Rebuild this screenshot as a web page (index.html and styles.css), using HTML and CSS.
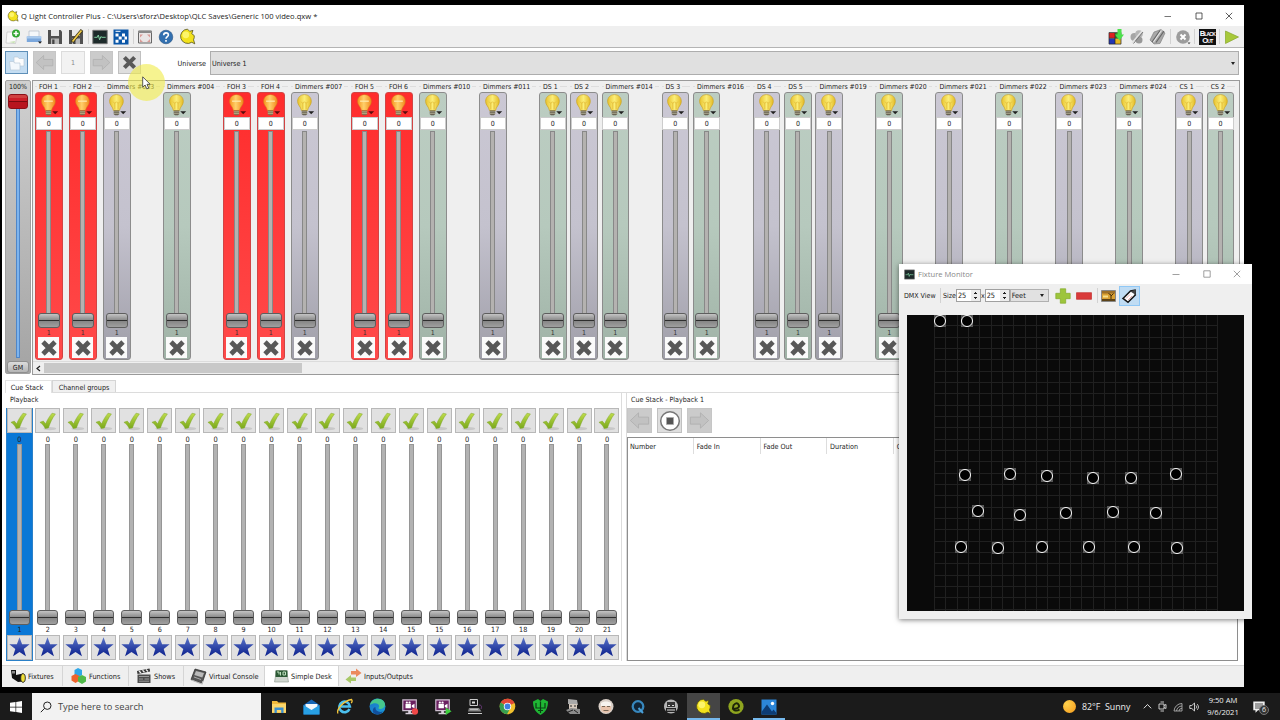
FILE: index.html
```
<!DOCTYPE html>
<html lang="en">
<head>
    <meta charset="UTF-8">
    <title>Q Light Controller Plus</title>
    <link rel="stylesheet" href="styles.css">
</head>
<body>

    <!-- Shared icons -->
    <svg class="defs" width="0" height="0">
        <defs>
            <linearGradient id="g-bulb" x1="0" x2="1"><stop offset="0" stop-color="#e8c22e"/><stop offset=".5" stop-color="#fbee78"/><stop offset="1" stop-color="#e3ba26"/></linearGradient>
            <linearGradient id="g-hot" x1="0" x2="1"><stop offset="0" stop-color="#f7931e"/><stop offset=".45" stop-color="#ffd06a"/><stop offset="1" stop-color="#f28a1c"/></linearGradient>
            <linearGradient id="g-star" x1="0" x2="0" y1="0" y2="1"><stop offset="0" stop-color="#5a74c8"/><stop offset="1" stop-color="#0a1f8c"/></linearGradient>
            <linearGradient id="g-check" x1="0" x2="0" y1="0" y2="1"><stop offset="0" stop-color="#bfdc4a"/><stop offset="1" stop-color="#79a81c"/></linearGradient>
            <linearGradient id="g-edge" x1="0" x2="1" y1="0" y2="1"><stop offset="0" stop-color="#1b74c8"/><stop offset="1" stop-color="#1a9bd8"/></linearGradient>
        </defs>
        <symbol id="bulb" viewBox="0 0 22 22">
            <path d="M10.500 1.500c-4 0-6.300 2.800-6.300 6.200 0 3.400 3 4.800 3.500 8.300h5.600c.6-3.500 3.500-4.900 3.500-8.300 0-3.400-2.300-6.200-6.300-6.200z" fill="url(#g-bulb)" stroke="#c9a224" stroke-width=".6"/>
            <path d="M7.500 8L9 9.500 10.500 8 12 9.500 13.500 8M9 9.500V15M12 9.500V15" fill="none" stroke="#d9a51c" stroke-width=".5"/>
            <path d="M8 16h5v3.500l-1.200 1H9.200l-1.200-1z" fill="#5f5a4c"/><path d="M8 17.300h5M8 18.900h5" stroke="#e6e0c0" stroke-width=".5"/>
            <path d="M14 16.700h5.400l-2.700 2.800z" fill="#222"/>
        </symbol>
        <symbol id="bulb-hot" viewBox="0 0 22 22">
            <path d="M10.500 1.500c-4 0-6.300 2.800-6.300 6.200 0 3.400 3 4.800 3.500 8.300h5.600c.6-3.500 3.500-4.900 3.500-8.300 0-3.400-2.300-6.200-6.300-6.200z" fill="url(#g-hot)" stroke="#d87a18" stroke-width=".5"/>
            <path d="M6.500 7.500h8" stroke="#ffe7a8" stroke-width="1.200"/>
            <path d="M8 16h5v3.500l-1.200 1H9.200l-1.200-1z" fill="#7c6a4c"/><path d="M8 17.300h5M8 18.900h5" stroke="#f3e0b0" stroke-width=".5"/>
            <path d="M14 16.700h5.400l-2.700 2.800z" fill="#5a0c0c"/>
        </symbol>
        <symbol id="cross" viewBox="0 0 20 20">
            <path d="M4 4l12 12M16 4l-12 12" stroke="#585858" stroke-width="4.800"/>
        </symbol>
        <symbol id="check" viewBox="0 0 24 24">
            <ellipse cx="14" cy="20.300" rx="7" ry="1.800" fill="#c8c8c8"/>
            <path d="M3.200 13.400l3.700-1.300 2.500 3c1.700-4 4.300-8.400 7-11.600l3.700.8c-3.600 4.900-5.700 9.600-7.600 15.200l-3.500.7c-1.300-2.800-3.200-4.900-5.800-6.800z" fill="url(#g-check)" stroke="#7ea428" stroke-width=".5"/>
        </symbol>
        <symbol id="star" viewBox="0 0 24 24">
            <path d="M12 1.300l2.700 7.400h7.900l-6.200 4.800 2.300 7.700-6.700-4.500-6.700 4.500 2.300-7.700-6.200-4.800h7.900z" fill="url(#g-star)"/>
        </symbol>
        <symbol id="left" viewBox="0 0 24 24">
            <path d="M2.500 12L11 4v4.500h10.500v7.300H11V20z" fill="#c2c2c2" stroke="#adadad" stroke-width=".8"/>
        </symbol>
        <symbol id="right" viewBox="0 0 24 24">
            <path d="M21.500 12L13 4v4.500H2.500v7.300H13V20z" fill="#c2c2c2" stroke="#adadad" stroke-width=".8"/>
        </symbol>
        <symbol id="qlc" viewBox="0 0 18 18">
            <path d="M9 1.200a7.600 7.600 0 1 0 4.500 13.900l3.200 1.700-1.300-4.300a7.600 7.600 0 0 0 .7-4.500L13.500 6l1.300-3.500-3.500 1z" fill="#f3e21c" stroke="#4c4a18" stroke-width=".8"/>
            <circle cx="7.200" cy="7.200" r="3.600" fill="#fdf56a"/>
        </symbol>
        <symbol id="floppy" viewBox="0 0 16 16">
            <path d="M1 1h12.500L15 2.500V15H1z" fill="#505050"/><path d="M4 1h8v6H4z" fill="#e8e8e8"/><path d="M4 9.500h8V15H4z" fill="#b8b8b8"/><path d="M5.200 10.500h2.300V15H5.200z" fill="#444"/>
        </symbol>
        <symbol id="scope" viewBox="0 0 16 16">
            <path d="M.8 1.300h14.400v13.400H.8z" fill="#1d2a2a" stroke="#777" stroke-width=".9"/><path d="M2.300 8.300h3l1-2.300 1.300 4.800 1.300-3.300 1 .8h3.800" fill="none" stroke="#7fd0a0" stroke-width="1"/>
        </symbol>
        <symbol id="monitor-app" viewBox="0 0 20 20">
            <path d="M2 2h15v12H2z" fill="#6a2060" stroke="#cdbfd0" stroke-width="1.300"/><path d="M8 14h3v2.500H8zM5 16.500h9v1.500H5z" fill="#d9d0dc"/><path d="M5 6.500h6v5H5zM12 8l3-1.500v5L12 10z" fill="#fff"/><circle cx="6.500" cy="5" r="1.200" fill="#fff"/><circle cx="9.500" cy="5" r="1.200" fill="#fff"/>
        </symbol>
    </svg>

    <div class="app">
        <div class="titlebar">
            <svg class="logo" width="12" height="12"><use href="#qlc"/></svg>
            <span class="title">Q Light Controller Plus - C:\Users\sforz\Desktop\QLC Saves\Generic 100 video.qxw *</span>
            <div class="win-buttons">
                <svg width="8" height="8" viewBox="0 0 8 8"><path d="M.5 4.500h6.500" stroke="#777" fill="none"/></svg>
                <svg width="8" height="8" viewBox="0 0 8 8"><path d="M1 1h6v6H1z" stroke="#333" stroke-width=".8" fill="none"/></svg>
                <svg width="8" height="8" viewBox="0 0 8 8"><path d="M.8.8l6.400 6.400M7.200.8L.8 7.200" stroke="#333" stroke-width=".8" fill="none"/></svg>
            </div>
        </div>

        <div class="toolbar">
            <svg width="16" height="16" viewBox="0 0 16 16"><path d="M2 3h8l2 3-1.500 8.500L1 14z" fill="#fafafa" stroke="#bbb" stroke-width=".6"/><path d="M4 13l6-1-.5 2.300z" fill="#c9e3b5"/><circle cx="11" cy="4.500" r="4" fill="#2fa52f"/><path d="M11 2v5M8.500 4.500h5" stroke="#fff" stroke-width="1.500"/></svg>
            <svg width="16" height="16" viewBox="0 0 16 16"><path d="M3 2h10v6H3z" fill="#f4f7fa" stroke="#a9b4c0" stroke-width=".6"/><path d="M.8 7.500h14.400V13H.8z" fill="#7ba7dc"/><path d="M.8 7.500h14.400v2H.8z" fill="#a9caee"/><path d="M12 12.500h4l-2 2.200z" fill="#222"/></svg>
            <svg width="16" height="16"><use href="#floppy"/></svg>
            <svg width="16" height="16" viewBox="0 0 16 16"><use href="#floppy"/><path d="M4 13L14 1" stroke="#3c3418" stroke-width="3.200"/><path d="M4.500 12.500L13.500 1.500" stroke="#f0cc48" stroke-width="1.700"/></svg>
            <i class="sep"></i>
            <svg width="16" height="16"><use href="#scope"/></svg>
            <svg width="16" height="16" viewBox="0 0 16 16"><path d="M.5.500h15v15H.500z" fill="#0b57a8"/><path d="M2.500 4.500h3v3h-3zM9 4.500h3v3H9zM5.700 7.600h3v3h-3zM11.500 7.600h2.500v3h-2.500zM2.500 10.700h3v3h-3zM9 10.700h3v3H9z" fill="#fff"/><path d="M2.500 2.300h5" stroke="#fff"/></svg>
            <i class="sep"></i>
            <svg width="16" height="16" viewBox="0 0 16 16"><path d="M1.500 2h13v12h-13z" fill="#e9e5e5" stroke="#666" stroke-width="1"/><path d="M1 2h14v2H1z" fill="#888"/><path d="M3 5.500h3L3 8.500zM13 5.500h-3l3 3zM3 13v-3l3 3zM13 13v-3l-3 3z" fill="#d99a96"/></svg>
            <svg width="16" height="16" viewBox="0 0 16 16"><circle cx="8" cy="8" r="6.800" fill="#3270b0" stroke="#25507f" stroke-width=".6"/><path d="M5.700 6.300c0-3.300 4.700-3 4.700-.3C10.400 7.600 8 7.600 8 9.800M8 11v1.700" fill="none" stroke="#fff" stroke-width="1.600"/></svg>
            <svg width="17" height="17"><use href="#qlc"/></svg>
            <div class="toolbar-right">
                <svg width="16" height="16" viewBox="0 0 16 16"><path d="M1 4h6v5H1z" fill="#d22"/><path d="M1 9.500h6V15H1z" fill="#2437b5"/><path d="M7 4h6v5H7z" fill="#3b8a2c"/><path d="M7 9.500h6V15H7z" fill="#e8b923"/><path d="M1 3.500v11.600h12V3.500zM7 4v11M1 9.300h12" fill="none" stroke="#222" stroke-width=".7"/><path d="M9.500 0h4v5.500H16l-4.500 6L7 5.500h2.500z" fill="#4be04b"/></svg>
                <svg width="16" height="16" viewBox="0 0 16 16"><circle cx="5.500" cy="8" r="4" fill="#a5a5a5"/><circle cx="10" cy="5" r="3.800" fill="#b5b5b5"/><circle cx="10" cy="11" r="3.500" fill="#989898"/><path d="M3 14L13 2" stroke="#e3e3e3" stroke-width="1.500"/><path d="M4.500 14.500L14 3" stroke="#777" stroke-width="1"/></svg>
                <svg width="17" height="16" viewBox="0 0 17 16"><path d="M5 3l7-2.500L16 4l-5 10.500-6 .5-4-4z" fill="#a8a8a8" stroke="#777" stroke-width=".6"/><path d="M3 13L11 1.500M7 13.500L15 2" stroke="#666" stroke-width="1.200"/><path d="M4.500 13L12.500 1.500" stroke="#e6e6e6" stroke-width="1.200"/></svg>
                <i class="sep"></i>
                <svg width="16" height="16" viewBox="0 0 16 16"><circle cx="8" cy="8" r="6.800" fill="#9c9c9c"/><path d="M5.500 5.500l5 5M10.500 5.500l-5 5" stroke="#fff" stroke-width="2"/><path d="M12.500 13.500h3l-1.500 1.700z" fill="#444"/></svg>
                <i class="sep"></i>
                <span class="blackout">Black<br>Out</span>
                <i class="sep"></i>
                <svg width="16" height="16" viewBox="0 0 16 16"><path d="M1.500 2l13 6-13 6.500z" fill="#a8c93a" stroke="#86a62a" stroke-width=".7"/></svg>
            </div>
        </div>

        <div class="page">
            <div class="universe-bar">
                <div class="tool on"><svg width="18" height="18" viewBox="0 0 18 18"><path d="M6 3h4l1 1.500h5V12H6z" fill="#fdfdfd" stroke="#b8c8d8" stroke-width=".7"/><path d="M1.500 7.500h4l1 1.500H12v7H2.500z" fill="#f3f8fc" stroke="#b8c8d8" stroke-width=".7"/></svg></div>
                <div class="tool off"><svg width="21" height="21"><use href="#left"/></svg></div>
                <div class="tool pagenum">1</div>
                <div class="tool off"><svg width="21" height="21"><use href="#right"/></svg></div>
                <div class="tool"><svg width="17" height="17"><use href="#cross"/></svg></div>
                <span class="universe-label">Universe</span>
                <div class="combo">Universe 1<i class="arrow"></i></div>
            </div>

            <div class="desk">
                <div class="grand-master">
                    <span>100%</span>
                    <div class="gm-handle"></div>
                    <div class="gm-track"></div>
                    <div class="gm-button">GM</div>
                </div>
                <div class="channel-area">
                    <div class="channels" id="channels"></div>
                    <div class="scrollbar">
                        <svg width="11" height="11" viewBox="0 0 11 11"><path d="M7 3L4 5.500 7 8" fill="none" stroke="#222" stroke-width="1.200"/></svg>
                        <div class="thumb"></div>
                    </div>
                </div>
            </div>

            <div class="tabs">
                <div class="tab current">Cue Stack</div>
                <div class="tab">Channel groups</div>
            </div>

            <div class="lower">
                <div class="group playback-group">
                    <span class="legend">Playback</span>
                    <div class="playbacks" id="playbacks"></div>
                </div>
                <div class="group cue-group">
                    <span class="legend">Cue Stack - Playback 1</span>
                    <div class="cue-buttons">
                        <div class="tool off"><svg width="23" height="23"><use href="#left"/></svg></div>
                        <div class="tool"><svg width="22" height="22" viewBox="0 0 22 22"><circle cx="11" cy="11" r="9.300" fill="#fff" stroke="#777" stroke-width="1.500"/><path d="M7.500 7.500h7v7h-7z" fill="#555" stroke="#aaa" stroke-width=".8"/></svg></div>
                        <div class="tool off"><svg width="23" height="23"><use href="#right"/></svg></div>
                    </div>
                    <div class="cue-table">
                        <span>Number</span><span>Fade In</span><span>Fade Out</span><span>Duration</span><span>Cue</span>
                    </div>
                </div>
            </div>
        </div>

        <div class="bottom-tabs">
            <div class="btab fixtures"><svg width="16" height="16" viewBox="0 0 16 16"><path d="M1 2h5v5l7-1.500v8L8 14 2 10z" fill="#111"/><path d="M2 3h3v2.500H2z" fill="#888"/><ellipse cx="13" cy="10" rx="2.300" ry="4.300" fill="#efdf3a" stroke="#222" stroke-width=".9"/></svg>Fixtures</div>
            <div class="btab functions"><svg width="16" height="16" viewBox="0 0 16 16"><path d="M7 0l4 2v5L7 9.500 3.500 7V2z" fill="#2fa7e8"/><path d="M4.500 6L8.500 8v4.500l-4 2.500-4-2.500V8z" fill="#f0642c"/><path d="M11 7l4 2v4.500L11 16l-4-2.500V9z" fill="#4fb848"/></svg>Functions</div>
            <div class="btab shows"><svg width="16" height="16" viewBox="0 0 16 16"><path d="M1.500 6.500h13V15h-13z" fill="#4c4c4c"/><path d="M1 3l12.500-2.500.6 3L1.500 6z" fill="#333"/><path d="M3 3l2 2M6.500 2.200l2 2M10 1.500l2 2" stroke="#eee" stroke-width="1.300"/><path d="M3 8.500h10M3 11h4M8.500 11H13M3 13.200h10" stroke="#bbb" stroke-width=".7"/></svg>Shows</div>
            <div class="btab console"><svg width="17" height="17" viewBox="0 0 17 17"><path d="M5 1l11 3-4 11.500-11-4z" fill="#555" stroke="#222" stroke-width=".7"/><path d="M6 3l8 2-1.700 4.500-8-2.500z" fill="#b9b9b9"/><path d="M1.500 12l10.500 4 1-3" stroke="#bbb" fill="none" stroke-width="1.200"/><path d="M4 9l7 2.500" stroke="#aaa"/></svg>Virtual Console</div>
            <div class="btab desk-tab current"><svg width="15" height="15" viewBox="0 0 15 15"><path d="M2.500 1.500h10L14.500 13H.5z" fill="#cfd6cf" stroke="#8c948c" stroke-width=".6"/><path d="M1.500 1.500h12V8h-12z" fill="#2c5a35"/><path d="M3 3h2v2.500M6.500 3v3.500M9 3h2.500v3H9z" stroke="#bfe0c0" fill="none"/></svg>Simple Desk</div>
            <div class="btab io"><svg width="17" height="16" viewBox="0 0 17 16"><path d="M6 3h5V.500L16.500 5 11 9V6.500H6z" fill="#ec8a5c"/><path d="M11 9.500H6V7L.5 11.500 6 15.500V13h5z" fill="#a8c868"/></svg>Inputs/Outputs</div>
        </div>
    </div>

    <div class="taskbar">
        <div class="start"><svg width="12" height="12" viewBox="0 0 12 12"><path d="M0 1.700L5.500 1v4.700H0zM6.200.9L12 0v5.700H6.200zM0 6.400h5.500V11L0 10.300zM6.200 6.400H12V12l-5.800-.9z" fill="#fff"/></svg></div>
        <div class="search"><svg width="12" height="12" viewBox="0 0 12 12"><circle cx="7.300" cy="4.700" r="3.700" fill="none" stroke="#222"/><path d="M4.700 7.300L.8 11.200" stroke="#222"/></svg>Type here to search</div>
        <div class="pinned">
            <div><svg width="16" height="16" viewBox="0 0 16 16"><path d="M1 2h5l1.500 1.500H15V14H1z" fill="#f0b93c"/><path d="M1 5h14v8.500H1z" fill="#fbd66c"/><path d="M3.500 14V8.500h9V14h-2.300v-3H5.800v3z" fill="#3b8fd0"/></svg></div>
            <div><svg width="17" height="16" viewBox="0 0 17 16"><path d="M.5 6L8.500.5l8 5.500v9.500H.5z" fill="#1565b5"/><path d="M2.500 5h12v6h-12z" fill="#f3f7fb"/><path d="M.5 6l8 5 8-5v9.500H.5z" fill="#28a0e4"/></svg></div>
            <div><svg width="17" height="17" viewBox="0 0 17 17"><path d="M13.500 11a5.300 5.300 0 1 1 .4-2.500H5" fill="none" stroke="#4cc0ee" stroke-width="2.600"/><path d="M2 15.500C0 12 7 3 15.500 1.500c1 1 .3 2.800-.3 3.600" fill="none" stroke="#f2c63c" stroke-width="1.300"/></svg></div>
            <div><svg width="17" height="17" viewBox="0 0 17 17"><circle cx="8.500" cy="8.500" r="8" fill="url(#g-edge)"/><path d="M1 7C2 1.500 8-.5 12.500 1.600 17 4 17.500 10 12 11c-2.500.3-3-1-2-2C11 5 5 4 1 7z" fill="#46c78c"/><path d="M6.500 9c-.7 3.500 3 6 7.500 4.500-3 4-9 3.500-10 .5-.7-2 .3-4.500 2.500-5z" fill="#114f9c"/></svg></div>
            <div><svg width="18" height="18" viewBox="0 0 20 20"><use href="#monitor-app" width="20" height="20"/><circle cx="15.500" cy="15" r="3.500" fill="#f04848"/></svg></div>
            <div><svg width="18" height="18" viewBox="0 0 20 20"><use href="#monitor-app" width="20" height="20"/><path d="M13 10.500l6.500 4.300L13 19z" fill="#3fd03f"/></svg></div>
            <div><svg width="17" height="17" viewBox="0 0 17 17"><path d="M3 1.500h7.500v6H3z" fill="none" stroke="#ccc"/><path d="M5 3.500h3v2H5z" fill="#ddd"/><path d="M2 10h10l2.500 3.500H1z" fill="#888"/><path d="M3 11.300h8M1 15.500h14" stroke="#ccc"/><path d="M12 7c3 0 3 2 2 4" stroke="#6d3a7d" fill="none"/></svg></div>
            <div><svg width="17" height="17" viewBox="0 0 17 17"><circle cx="8.500" cy="8.500" r="7.800" fill="#f2c12e"/><path d="M8.500 8.500L1.700 4.600A7.800 7.800 0 0 1 15.500 5z" fill="#e04838"/><path d="M1.700 4.600A7.800 7.800 0 0 0 8 16.300l3.200-6z" fill="#36a050"/><circle cx="8.500" cy="8.500" r="3.700" fill="#fff"/><circle cx="8.500" cy="8.500" r="2.900" fill="#3d7fe0"/></svg></div>
            <div><svg width="17" height="17" viewBox="0 0 17 17"><path d="M1 3.500l5-2.500 2.500 2L11 1l5 2.500c0 6-2 10.500-7.500 13.500C3 14 1 9.500 1 3.500z" fill="#1fb634"/><path d="M4 5v5h9V5M8.500 3.500V15M6 12.500h5" stroke="#0b3d14" fill="none" stroke-width="1.200"/></svg></div>
            <div><svg width="16" height="17" viewBox="0 0 16 17"><path d="M3 1l9 1 1 5-10-1z" fill="#a9a9a9"/><path d="M4 6h8v6H4z" fill="#d5c9bd"/><path d="M1 12l5-2 9 1v5H5z" fill="#8c8c8c"/><path d="M5 8h2M9 8h2M3 14l5-2M9 12l4 3" stroke="#222"/></svg></div>
            <div><svg width="16" height="17" viewBox="0 0 16 17"><circle cx="8" cy="8.500" r="7.500" fill="#d9cfc7"/><path d="M3 7.500h10V12c-2 3.500-8 3.500-10 0z" fill="#e8c2aa"/><path d="M3 5c3-2 7-2 10 0v3H3z" fill="#f7f3ee"/><path d="M4 8.500h3M9 8.500h3M5.500 12.500h5" stroke="#765"/></svg></div>
            <div><svg width="16" height="16" viewBox="0 0 16 16"><circle cx="8" cy="7.500" r="5.300" fill="#102436" stroke="#3787bd" stroke-width="2.300"/><path d="M8.500 9l4.500 5" stroke="#4aa0d8" stroke-width="2"/></svg></div>
            <div><svg width="16" height="17" viewBox="0 0 16 17"><circle cx="8" cy="8.500" r="7" fill="#b4b4b4"/><path d="M4 4h8v5H4z" fill="#333"/><path d="M3 10h10v4H3z" fill="#222"/><path d="M5 7.500h2M9 7.500h2M4 12h8" stroke="#ddd"/></svg></div>
            <div class="active running"><svg width="17" height="17"><use href="#qlc"/></svg></div>
            <div><svg width="16" height="17" viewBox="0 0 16 17"><circle cx="8" cy="8.500" r="7.600" fill="#8fa51f"/><path d="M4 10.500c6 1 8-1.500 6.500-4C9 4 5 6 5 9.500c0 3.500 4 3.800 6.500 2" fill="none" stroke="#1d2408" stroke-width="1.900"/></svg></div>
            <div class="running"><svg width="16" height="16" viewBox="0 0 16 16"><path d="M.5.500h15v15H.500z" fill="#2c86d8"/><path d="M.5 13L6 5.500l5 7 1.500-2 3 3.500v1.500H.5z" fill="#0d3c74"/><circle cx="11.500" cy="4.500" r="1.700" fill="#fff"/></svg></div>
        </div>
        <div class="tray">
            <i class="sun"></i><span class="weather">82°F&nbsp; Sunny</span>
            <svg width="9" height="9" viewBox="0 0 9 9"><path d="M.8 6.300L4.500 2.500l3.700 3.800" fill="none" stroke="#ddd"/></svg>
            <svg width="9" height="11" viewBox="0 0 9 11"><path d="M1 3h5v5H1zM6 4.500l2-1v4l-2-1M2.500 1h3.500M2.500 10h3.500" fill="none" stroke="#ddd" stroke-width=".9"/></svg>
            <svg width="10" height="10" viewBox="0 0 10 10"><path d="M1 9A8 8 0 0 1 9 1.500M3.500 9A5.500 5.500 0 0 1 9 4M6 9a3 3 0 0 1 3-2.700M1 9h8V1.500" fill="none" stroke="#aaa" stroke-width=".9"/></svg>
            <svg width="11" height="10" viewBox="0 0 11 10"><path d="M.8 3.500h2L5.500 1v8L2.800 6.500h-2zM7 3.500c.7 1 .7 2 0 3M8.300 2.200c1.500 2 1.500 3.600 0 5.600" fill="none" stroke="#ddd" stroke-width=".9"/></svg>
            <div class="clock">9:50 AM<br>9/6/2021</div>
            <div class="notes"><svg width="12" height="12" viewBox="0 0 12 12"><path d="M.3.500h11.400v8.700H5L2.500 11.700V9.200H.3z" fill="#eee"/><path d="M2 3h8M2 5h8M2 7h6" stroke="#222" stroke-width=".8"/></svg><span class="badge">6</span></div>
        </div>
    </div>

    <div class="monitor">
        <div class="monitor-title">
            <svg width="11" height="11"><use href="#scope"/></svg>
            <span>Fixture Monitor</span>
            <div class="win-buttons">
                <svg width="8" height="8" viewBox="0 0 8 8"><path d="M.5 4.500h7" stroke="#888" stroke-width=".8" fill="none"/></svg>
                <svg width="8" height="8" viewBox="0 0 8 8"><path d="M.8.800h6.400v6.400H.8z" stroke="#888" stroke-width=".8" fill="none"/></svg>
                <svg width="8" height="8" viewBox="0 0 8 8"><path d="M.8.800l6.400 6.400M7.200.800L.8 7.200" stroke="#888" stroke-width=".8" fill="none"/></svg>
            </div>
        </div>
        <div class="monitor-tools">
            <span class="view">DMX View</span><i class="sep"></i>
            <span>Size</span><div class="spin">25<i></i></div><span>x</span><div class="spin">25<i></i></div>
            <div class="unit">Feet<i class="arrow"></i></div>
            <svg class="plus" width="16" height="16" viewBox="0 0 16 16"><path d="M5.300.800h5.400v4.500h4.500v5.400h-4.500v4.500H5.300v-4.500H.8V5.300h4.500z" fill="#9dc53c" stroke="#84aa2a" stroke-width=".7"/></svg>
            <svg class="minus" width="16" height="8" viewBox="0 0 16 8"><path d="M.5.700h15v6.600H.5z" fill="#d93a3a" stroke="#c33030" stroke-width=".7"/></svg>
            <i class="sep"></i>
            <svg class="photo" width="15" height="12" viewBox="0 0 15 12"><path d="M.5.500h14v11H.5z" fill="#d9a032" stroke="#888"/><path d="M1 1h13v2.500H1z" fill="#9c6f28"/><path d="M1 9h13v2H1z" fill="#5c4318"/><path d="M10 9V5L7.500 3.500M10 6l2.500-2.500" fill="none" stroke="#3d2a0e"/><path d="M2 5.500h5v2H2z" fill="#f8e08a"/></svg>
            <div class="tag"><svg width="16" height="16" viewBox="0 0 16 16"><path d="M2 10.500L9.500 3l4.500-.7.300 4.700L7 14.300z" fill="#fff" stroke="#151515" stroke-width="1.600"/><path d="M5 10.500l4-4M7 12l4-4" stroke="#e9a0a0" stroke-width=".9"/><path d="M9.500 3.500L14.500 1.500l.3 5.500z" fill="#444"/></svg></div>
        </div>
        <div class="stage" id="stage"><div class="grid"></div></div>
    </div>

    <div class="spot"><svg width="9" height="14" viewBox="0 0 9 14"><path d="M.7.800v10.400l2.400-2.200 1.700 3.900 1.900-.8-1.700-3.800h3.200z" fill="#fff" stroke="#333" stroke-width=".8"/></svg></div>

    <script>
        // name, strip colour
        const channels = [
            ["FOH 1", "red"], ["FOH 2", "red"], ["Dimmers #003", "violet"], ["Dimmers #004", "green"],
            ["FOH 3", "red"], ["FOH 4", "red"], ["Dimmers #007", "violet"],
            ["FOH 5", "red"], ["FOH 6", "red"], ["Dimmers #010", "green"], ["Dimmers #011", "violet"],
            ["DS 1", "green"], ["DS 2", "violet"], ["Dimmers #014", "green"],
            ["DS 3", "violet"], ["Dimmers #016", "green"],
            ["DS 4", "violet"], ["DS 5", "green"], ["Dimmers #019", "violet"], ["Dimmers #020", "green"],
            ["Dimmers #021", "violet"], ["Dimmers #022", "green"], ["Dimmers #023", "violet"], ["Dimmers #024", "green"],
            ["CS 1", "violet"], ["CS 2", "green"]
        ];

        function sizeClass(name) {
            if (name.startsWith("Dimmers")) return "wide";
            if (name.startsWith("FOH")) return "mid";
            return "slim";
        }

        document.getElementById("channels").innerHTML = channels.map(([name, color]) => `
            <div class="channel ${sizeClass(name)}">
                <div class="name"><span>${name}</span></div>
                <div class="strip ${color}">
                    <svg class="bulb" width="24" height="24"><use href="#${color === "red" ? "bulb-hot" : "bulb"}"/></svg>
                    <div class="value">0</div>
                    <div class="track"></div>
                    <div class="handle"></div>
                    <div class="num">1</div>
                    <div class="reset"><svg width="20" height="20"><use href="#cross"/></svg></div>
                </div>
            </div>`).join("");

        const playbacks = [1, 2, 3, 4, 5, 6, 7, 8, 9, 10, 11, 12, 13, 14, 15, 15, 16, 17, 18, 19, 20, 21];

        document.getElementById("playbacks").innerHTML = playbacks.map((n, i) => `
            <div class="playback${i === 0 ? " selected" : ""}">
                <div class="pbtn"><svg width="22" height="22"><use href="#check"/></svg></div>
                <div class="level">0</div>
                <div class="track"></div>
                <div class="handle"></div>
                <div class="num">${n}</div>
                <div class="pbtn"><svg width="23" height="23"><use href="#star"/></svg></div>
            </div>`).join("");

        // fixture centres on the stage, in pixels
        const fixtures = [
            [33, 5.5], [60, 5.5],
            [57.5, 160], [102.5, 159], [140, 161], [186, 162.5], [224, 163], [269, 159],
            [71, 196], [113, 199.5], [159, 198], [206, 197], [248.5, 197.5],
            [54, 231.5], [91, 232.5], [134.5, 232], [182, 231.5], [227, 231.5], [270, 233]
        ];

        document.getElementById("stage").innerHTML += fixtures.map(([x, y]) =>
            `<div class="fixture" style="left:${x - 6}px;top:${y - 6}px"></div>`).join("");
    </script>

</body>
</html>
```
FILE: styles.css
```
*, *::after {
    box-sizing: border-box;
}
body {
    margin: 0;
    width: 1280px;
    height: 720px;
    overflow: hidden;
    background: #000;
    color: #222;
    font-family: "DejaVu Sans Condensed", "DejaVu Sans", sans-serif;
    font-stretch: condensed;
    font-size: 7px;
    padding-top: 5px;
}
svg {
    display: block;
    flex: none;
}
.defs {
    position: absolute;
}
.app {
    width: 1242px;
    height: 682px;
    margin-left: 2px;
    background: #fff;
    display: flex;
    flex-direction: column;
}

/* title bar and main toolbar */
.titlebar {
    height: 21px;
    display: flex;
    align-items: center;
    padding-left: 5px;
    background: #fff;
}
.title {
    margin-left: 2px;
    font: 7.6px "Open Sans", sans-serif;
    color: #222;
    white-space: nowrap;
}
.win-buttons {
    margin-left: auto;
    display: flex;
    gap: 22.3px;
    padding-right: 11px;
}
.toolbar {
    height: 22px;
    display: flex;
    align-items: center;
    gap: 5px;
    padding-left: 3px;
    background: #efefef;
    border-bottom: 1px solid #b4b4b4;
}
.sep {
    width: 1px;
    height: 15px;
    background: #d2d2d2;
}
.toolbar .sep {
    margin: 0 -1.5px;
}
.toolbar-right {
    margin-left: auto;
    display: flex;
    align-items: center;
    gap: 4.6px;
    padding-right: 4px;
}
.toolbar-right .sep {
    margin: 0 -1px;
}
.blackout {
    width: 17px;
    height: 16px;
    background: #111;
    color: #fff;
    font: bold 7.6px/7px "Liberation Sans", sans-serif;
    font-variant: small-caps;
    letter-spacing: -0.8px;
    text-align: center;
    padding-top: 1px;
    overflow: hidden;
}

/* universe row */
.page {
    flex: 1;
    padding: 3px 3px 0;
}
.universe-bar {
    display: flex;
    height: 24px;
}
.tool {
    width: 23px;
    height: 23px;
    margin-right: 5px;
    display: flex;
    align-items: center;
    justify-content: center;
    background: #dedede;
    border: 1px solid #c0c0c0;
}
.tool.on {
    background: #c4ddf2;
    border-color: #5e8fb8;
}
.tool.off {
    background: #cbcbcb;
    border-color: #c6c6c6;
}
.tool.pagenum {
    width: 24px;
    background: #f2f2f2;
    border-color: #dcdcdc;
    color: #888;
}
.universe-label {
    width: 64px;
    padding: 8px 4px 0 0;
    font-size: 7.2px;
    text-align: right;
}
.combo {
    flex: 1;
    height: 24px;
    margin-right: 2px;
    padding: 0 3px 0 1px;
    display: flex;
    align-items: center;
    justify-content: space-between;
    background: #e0e0e0;
    border: 1px solid #adadad;
    font-size: 7.2px;
}
.arrow {
    border: 2.5px solid transparent;
    border-top: 3px solid #222;
    border-bottom: 0;
}

/* faders */
.desk {
    display: flex;
    margin-top: 5px;
    height: 295px;
}
.grand-master {
    width: 26px;
    height: 294px;
    display: flex;
    flex-direction: column;
    align-items: center;
    background: linear-gradient(#d0d0d0, #a4a4a4);
    border: 1px solid #a0a0a0;
    border-radius: 2px;
    padding-top: 2px;
}
.gm-handle {
    width: 20px;
    height: 15px;
    margin-top: 3px;
    border: 1px solid #8a1018;
    border-radius: 3px;
    background: linear-gradient(#d04040 0 20%, #cc1f28 20% 45%, #7a0a10 45% 55%, #b8141e 55%);
}
.gm-track {
    width: 4px;
    flex: 1;
    background: #7db4ee;
    border: 1px solid #4f86c8;
    border-top: 0;
}
.gm-button {
    width: 22px;
    height: 12px;
    margin: 3px 0 0;
    border: 1px solid #8f8f8f;
    border-radius: 3px;
    background: linear-gradient(#dcdcdc, #b5b5b5);
    text-align: center;
    line-height: 12px;
}
.channel-area {
    width: 1208px;
    margin-left: 1px;
    background: #efefef;
    border: 1px solid #9a9a9a;
    display: flex;
    flex-direction: column;
    overflow: hidden;
}
.channels {
    flex: 1;
    display: flex;
    padding-left: 2px;
    overflow: hidden;
}
.channel {
    flex: none;
}
.channel.wide {
    width: 60px;
}
.channel.mid {
    width: 34px;
}
.channel.slim {
    width: 31.3px;
}
.name {
    height: 11px;
    padding: 1px 0 0 2px;
    white-space: nowrap;
    font-size: 6.9px;
    line-height: 11px;
    background: linear-gradient(#dedede, #dedede) 0 5px / calc(100% - 3px) 1px no-repeat;
}
.name span {
    padding: 0 2px;
    background: #efefef;
}
.strip {
    width: 27.5px;
    height: 268px;
    border: 1px solid #8c8c8c;
    border-radius: 3px;
    display: flex;
    flex-direction: column;
    align-items: center;
}
.strip.red {
    background: linear-gradient(#ff2c2c, #ff4a4a);
    border-color: #d24444;
}
.strip.violet {
    background: linear-gradient(#cbc8d4, #c4c2ce 50%, #9f9ea8);
}
.strip.green {
    background: linear-gradient(#bccdc2, #b6c9bd 50%, #9fb2a6);
}
.bulb {
    height: 24px;
}
.value {
    width: 26px;
    height: 13px;
    background: #fff;
    border: 1px solid #ccc;
    text-align: center;
    line-height: 12px;
}
.track {
    width: 5px;
    height: 182px;
    margin-top: 1px;
    background: #b4b2b0;
    border: 1px solid #888;
    border-width: 1px 1px 0 1px;
}
.handle {
    flex: none;
    width: 22.5px;
    height: 15px;
    border: 1px solid #5e5e5e;
    border-radius: 3px;
    background: linear-gradient(#c4c4c4, #8c8c8c 45%, #2e2e2e 45% 55%, #868686 55%, #a0a0a0);
}
.num {
    height: 9px;
    line-height: 10px;
    color: #333;
}
.reset {
    width: 21px;
    height: 21px;
    background: #fafafa;
    display: flex;
    align-items: center;
    justify-content: center;
}
.scrollbar {
    height: 13px;
    display: flex;
    align-items: center;
    border-top: 1px solid #dcdcdc;
}
.thumb {
    width: 258px;
    height: 10px;
    background: #c8c8c8;
}

/* cue stack / channel groups */
.tabs {
    height: 18px;
    padding-top: 5px;
    display: flex;
    align-items: flex-end;
    border-bottom: 1px solid #dcdcdc;
}
.tab {
    width: 64px;
    height: 12px;
    background: #f0f0f0;
    border: 1px solid #d5d5d5;
    border-bottom: 0;
    text-align: center;
    font-size: 7.2px;
    line-height: 13px;
}
.tab.current {
    width: 47px;
    height: 13px;
    background: #fff;
    border-color: #e2e2e2;
    margin-bottom: -1px;
    padding-right: 3px;
}
.lower {
    display: flex;
    gap: 4px;
    height: 270px;
}
.group {
    height: 268px;
    padding-top: 1px;
}
.legend {
    display: block;
    height: 14px;
    padding-left: 5px;
    font-size: 7.1px;
    line-height: 11px;
}
.playback-group {
    width: 617px;
    border-right: 1px solid #dcdcdc;
}
.playbacks {
    display: flex;
    padding-left: 1px;
}
.playback {
    width: 28px;
    height: 253px;
    display: flex;
    flex-direction: column;
    align-items: center;
}
.playback.selected {
    background: #0a78d6;
    box-shadow: inset 0 0 0 1px #2a80c8;
    width: 27px;
    margin-right: 1px;
}
.pbtn {
    width: 25px;
    height: 25px;
    display: flex;
    align-items: center;
    justify-content: center;
    background: #e1e1e1;
    border: 1px solid #b8b8b8;
}
.level {
    height: 10px;
    line-height: 14px;
    font-size: 7.4px;
}
.playback .track {
    height: 166px;
    background: #b2b2b2;
    border-color: #969696;
}
.playback .handle {
    width: 21px;
}
.playback .num {
    height: 10px;
    line-height: 10px;
    font-size: 7.2px;
    color: #222;
}
.cue-group {
    width: 612px;
    border-left: 1px solid #dcdcdc;
}
.cue-group .legend {
    padding-left: 4px;
}
.cue-buttons {
    display: flex;
    height: 29px;
}
.cue-buttons .tool {
    width: 25px;
    height: 25px;
}
.cue-table {
    height: 224px;
    border: 1px solid #8e8e8e;
    display: flex;
    padding-left: 2px;
    font-size: 7.2px;
    line-height: 17px;
}
.cue-table span {
    width: 66.7px;
    height: 16px;
    background: linear-gradient(#ddd, #ddd) 63px 0 / 1px 100% no-repeat;
}

/* bottom tabs */
.bottom-tabs {
    height: 22px;
    display: flex;
    background: #efefef;
    border-top: 1px solid #d5d5d5;
    font-size: 7.3px;
    padding-left: 1px;
}
.btab {
    display: flex;
    align-items: center;
    gap: 2px;
    height: 20px;
    border-right: 1px solid #d5d5d5;
}
.btab.current {
    background: #fff;
}
.fixtures {
    width: 60px;
    padding-left: 7px;
}
.functions {
    width: 66px;
    padding-left: 8px;
}
.shows {
    width: 55px;
    padding-left: 7px;
}
.console {
    width: 81px;
    padding-left: 6px;
}
.desk-tab {
    width: 74px;
    padding-left: 9px;
}
.io {
    padding-left: 6px;
    border: 0;
}

/* windows taskbar */
.taskbar {
    display: flex;
    height: 27px;
    margin-top: 6px;
    background: #1b1b1b;
    font-family: "Open Sans", sans-serif;
    font-stretch: normal;
    color: #eee;
}
.start {
    width: 32px;
    display: flex;
    align-items: center;
    justify-content: center;
}
.search {
    width: 229px;
    display: flex;
    align-items: center;
    gap: 6px;
    padding-left: 8px;
    background: #f2f2f2;
    color: #444;
    font-size: 9.3px;
}
.pinned {
    display: flex;
    padding-left: 2px;
}
.pinned div {
    width: 32.65px;
    display: flex;
    align-items: center;
    justify-content: center;
}
.pinned .active {
    background: #454545;
}
.pinned .running {
    box-shadow: inset 0 -2px #76b9ed;
}
.tray {
    margin-left: auto;
    display: flex;
    align-items: center;
    gap: 6px;
    padding-right: 10px;
}
.sun {
    width: 13px;
    height: 13px;
    border-radius: 50%;
    background: radial-gradient(circle at 30% 30%, #ffd24c, #f59a1c);
}
.weather {
    width: 50px;
    font-size: 8.8px;
    white-space: nowrap;
    margin-right: 5px;
}
.clock {
    width: 36px;
    font-size: 7.6px;
    line-height: 12px;
    text-align: center;
    white-space: nowrap;
    margin: -1px 0 0 -1px;
}
.notes {
    position: relative;
    margin-left: 6px;
    width: 17px;
}
.badge {
    position: absolute;
    left: 6px;
    top: 4px;
    width: 10px;
    height: 10px;
    border: 1px solid #777;
    border-radius: 50%;
    background: #333;
    font-size: 7px;
    line-height: 8px;
    text-align: center;
}

/* fixture monitor window */
.monitor {
    position: absolute;
    left: 899px;
    top: 264px;
    width: 353px;
    height: 355px;
    background: #efefef;
    box-shadow: 0 1px 5px rgba(0, 0, 0, 0.5);
}
.monitor-title {
    height: 20px;
    display: flex;
    align-items: center;
    padding-left: 5px;
    background: #fff;
    font: 7.6px "Open Sans", sans-serif;
    color: #888;
}
.monitor-title span {
    margin-left: 3px;
}
.monitor-tools {
    height: 31px;
    display: flex;
    align-items: center;
    padding: 0 0 8px 5px;
}
.monitor-tools .sep {
    margin: 0 2px 0 5px;
}
.monitor-tools .view {
    width: 31px;
    white-space: nowrap;
}
.spin {
    width: 25px;
    height: 13px;
    padding-left: 1px;
    background: #fff;
    border: 1px solid #a0a0a0;
    line-height: 11px;
    display: flex;
    justify-content: space-between;
    font-size: 7.3px;
}
.spin i {
    width: 9px;
    background:
        linear-gradient(#222, #222) 50% 2px / 1px 1px no-repeat,
        linear-gradient(#222, #222) 50% 3px / 3px 1px no-repeat,
        linear-gradient(#222, #222) 50% 7px / 3px 1px no-repeat,
        linear-gradient(#222, #222) 50% 8px / 1px 1px no-repeat,
        #ececec;
}
.unit {
    width: 39px;
    height: 13px;
    padding: 0 4px 0 1px;
    background: #e1e1e1;
    border: 1px solid #b0b0b0;
    display: flex;
    align-items: center;
    justify-content: space-between;
    font-size: 7.3px;
}
.plus {
    margin-left: 6px;
}
.minus {
    margin-left: 5px;
}
.photo {
    margin-left: 1px;
}
.tag {
    width: 21px;
    height: 20px;
    margin-left: 3px;
    display: flex;
    align-items: center;
    justify-content: center;
    background: #c0dcf3;
    border: 1px solid #90c8f6;
}
.stage {
    position: relative;
    width: 337px;
    height: 296px;
    margin-left: 8px;
    background: #0a0a0a;
    overflow: hidden;
}
.grid {
    width: 284px;
    height: 297px;
    margin-left: 27px;
    background:
        repeating-linear-gradient(90deg, #202020 0 1px, transparent 1px 11.33px),
        repeating-linear-gradient(transparent 0 10.33px, #202020 10.33px 11.33px);
}
.fixture {
    position: absolute;
    width: 12px;
    height: 12px;
    background: #555;
}
.fixture::after {
    content: "";
    display: block;
    width: 12px;
    height: 12px;
    border: 1px solid #fff;
    border-radius: 50%;
    background: #000;
}

/* pointer highlight */
.spot {
    position: absolute;
    left: 128px;
    top: 64px;
    width: 37px;
    height: 37px;
    border-radius: 50%;
    background: rgba(240, 235, 70, 0.6);
    padding: 12px 0 0 14px;
}
```
